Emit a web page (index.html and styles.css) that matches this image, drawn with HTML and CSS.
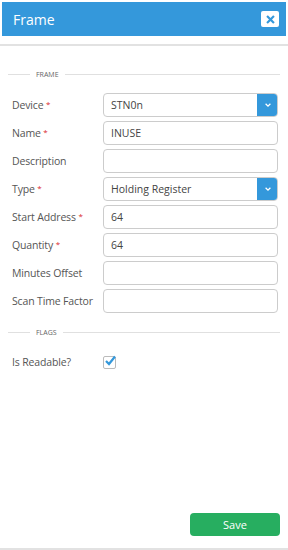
FILE: index.html
```html
<!DOCTYPE html>
<html lang="en">
<head>
    <meta charset="UTF-8">
    <meta name="viewport" content="width=device-width, initial-scale=1.0">
    <title>Frame</title>
    <link rel="stylesheet" href="styles.css">
</head>
<body>
    <div class="modal">
        <div class="modal-header">
            <div class="modal-title">Frame</div>
            <button class="close-button">
                <svg viewBox="0 0 10 10" width="9" height="9">
                    <path d="M2 2 L8 8 M8 2 L2 8" stroke="#3498db" stroke-width="2.4" stroke-linecap="square"/>
                </svg>
            </button>
        </div>

        <div class="modal-body">
            <div class="legend"><span>FRAME</span></div>

            <div class="form-rows">
                <div class="form-row">
                    <label class="form-label">Device <span class="req">*</span></label>
                    <div class="select-box">
                        <span class="field-value">STN0n</span>
                        <span class="select-arrow">
                            <svg viewBox="0 0 10 10" width="8" height="8">
                                <path d="M2 3.5 L5 6.5 L8 3.5" fill="none" stroke="white" stroke-width="1.6"/>
                            </svg>
                        </span>
                    </div>
                </div>
                <div class="form-row">
                    <label class="form-label">Name <span class="req">*</span></label>
                    <div class="input-box"><span class="field-value">INUSE</span></div>
                </div>
                <div class="form-row">
                    <label class="form-label">Description</label>
                    <div class="input-box"></div>
                </div>
                <div class="form-row">
                    <label class="form-label">Type <span class="req">*</span></label>
                    <div class="select-box">
                        <span class="field-value">Holding Register</span>
                        <span class="select-arrow">
                            <svg viewBox="0 0 10 10" width="8" height="8">
                                <path d="M2 3.5 L5 6.5 L8 3.5" fill="none" stroke="white" stroke-width="1.6"/>
                            </svg>
                        </span>
                    </div>
                </div>
                <div class="form-row">
                    <label class="form-label">Start Address <span class="req">*</span></label>
                    <div class="input-box"><span class="field-value">64</span></div>
                </div>
                <div class="form-row">
                    <label class="form-label">Quantity <span class="req">*</span></label>
                    <div class="input-box"><span class="field-value">64</span></div>
                </div>
                <div class="form-row">
                    <label class="form-label">Minutes Offset</label>
                    <div class="input-box"></div>
                </div>
                <div class="form-row">
                    <label class="form-label">Scan Time Factor</label>
                    <div class="input-box"></div>
                </div>
            </div>

            <div class="legend legend-flags"><span>FLAGS</span></div>

            <div class="form-row check-row">
                <label class="form-label">Is Readable?</label>
                <span class="checkbox">
                    <svg viewBox="0 0 12 12" width="12" height="12">
                        <path d="M2 6 L5 9 L11 1.5" fill="none" stroke="#3498db" stroke-width="2.2"/>
                    </svg>
                </span>
            </div>
        </div>

        <div class="modal-footer">
            <button class="save-button">Save</button>
        </div>
    </div>
</body>
</html>
```

FILE: styles.css
```css
body {
    margin: 0;
    background: #fff;
    font-family: "Open Sans", "Liberation Sans", sans-serif;
    color: #555;
}
.modal {
    width: 288px;
    height: 550px;
    display: flex;
    flex-direction: column;
}
.modal-header {
    margin: 2px 2px 0 2px;
    height: 34px;
    background: #3498db;
    display: flex;
    align-items: center;
    justify-content: space-between;
    padding: 0 7px 0 11px;
}
.modal-title {
    color: #fff;
    font-size: 14px;
}
.close-button {
    width: 18px;
    height: 16px;
    background: #fff;
    border: none;
    border-radius: 2px;
    padding: 0;
    display: flex;
    align-items: center;
    justify-content: center;
}
.modal-body {
    margin-top: 8px;
    border-top: 2px solid #e2e2e2;
    padding: 24px 8px 0 8px;
    flex: 1;
}
.legend {
    display: flex;
    align-items: center;
    font-size: 7px;
    color: #666;
    gap: 6px;
}
.legend::before {
    content: "";
    width: 22px;
    border-top: 1px solid #e0e0e0;
}
.legend::after {
    content: "";
    flex: 1;
    border-top: 1px solid #e0e0e0;
}
.form-rows {
    display: flex;
    flex-direction: column;
    gap: 4px;
    margin-top: 14px;
}
.form-row {
    display: flex;
    align-items: center;
}
.form-label {
    width: 95px;
    padding-left: 4px;
    font-size: 10.5px;
    letter-spacing: -0.15px;
    color: #555;
    box-sizing: border-box;
}
.req {
    color: #d9262c;
    font-size: 8px;
    vertical-align: 2px;
}
.input-box,
.select-box {
    flex: 1;
    height: 24px;
    margin-right: 2px;
    border: 1px solid #ccc;
    border-radius: 4px;
    box-sizing: border-box;
    display: flex;
    align-items: center;
    overflow: hidden;
}
.field-value {
    flex: 1;
    padding-left: 7px;
    font-size: 10.5px;
    color: #444;
}
.select-arrow {
    width: 21px;
    height: 24px;
    background: #3498db;
    display: flex;
    align-items: center;
    justify-content: center;
    margin-right: -1px;
}
.legend-flags {
    margin-top: 15px;
}
.check-row {
    margin-top: 18px;
}
.checkbox {
    width: 11px;
    height: 11px;
    border: 1px solid #bbb;
    border-radius: 2px;
    position: relative;
}
.checkbox svg {
    position: absolute;
    left: 0;
    top: -2px;
}
.modal-footer {
    display: flex;
    justify-content: flex-end;
    padding: 0 8px 12px 0;
    border-bottom: 2px solid #e2e2e2;
}
.save-button {
    width: 90px;
    height: 23px;
    background: #27ae60;
    border: none;
    border-radius: 4px;
    color: #fff;
    font-family: "Open Sans", "Liberation Sans", sans-serif;
    font-size: 11px;
}
```
